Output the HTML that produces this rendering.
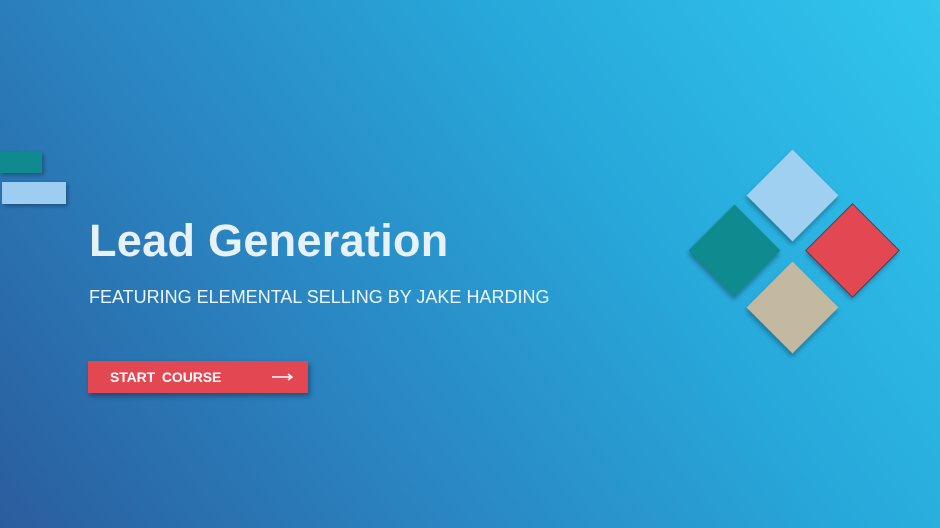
<!DOCTYPE html>
<html><head><style>
html,body{margin:0;padding:0}
body{width:940px;height:528px;overflow:hidden;position:relative;font-family:"Liberation Sans",sans-serif;
background:linear-gradient(235deg,#31c6ed 0%,#27a8da 35%,#2a86c2 65%,#2a5d9e 100%);}
.a{position:absolute}
.d{position:absolute;width:65px;height:65px;transform:rotate(45deg);box-shadow:2px 3px 5px rgba(0,0,0,.3)}
</style></head><body>
<div class="a" style="left:89px;top:215px;font-size:45px;font-weight:bold;color:#e6f1f8;letter-spacing:0.3px">Lead Generation</div>
<div class="a" style="left:0;top:152px;width:42px;height:21px;background:#0f8a8f;box-shadow:2px 2px 4px rgba(0,0,0,.3)"></div>
<div class="a" style="left:2px;top:182px;width:64px;height:22px;background:#9dcdf1;box-shadow:2px 2px 4px rgba(0,0,0,.3)"></div>
<div class="a" style="left:89px;top:287px;font-size:18px;color:#eef6fb;letter-spacing:0px">FEATURING ELEMENTAL SELLING BY JAKE HARDING</div>
<div class="a" style="left:88px;top:361px;width:220px;height:32px;background:#e34852;box-shadow:2px 3px 5px rgba(0,0,0,.35)">
<span class="a" style="left:22px;top:8px;font-size:14px;font-weight:bold;color:#fff;word-spacing:3px;letter-spacing:-0.1px">START COURSE</span>
<svg class="a" style="left:183px;top:11px" width="24" height="10"><path d="M1 5H21M17 2L21 5L17 8" stroke="#fff" stroke-width="1.5" fill="none"/></svg>
</div>
<div class="d" style="left:759.5px;top:162.5px;background:#9fd0f2"></div>
<div class="d" style="left:701.5px;top:217.5px;background:#0f8a8f"></div>
<div class="d" style="left:819.5px;top:217.5px;background:#e34852;outline:1px solid #7a2a3a"></div>
<div class="d" style="left:759.5px;top:274.5px;background:#c3b8a0"></div>
</body></html>
